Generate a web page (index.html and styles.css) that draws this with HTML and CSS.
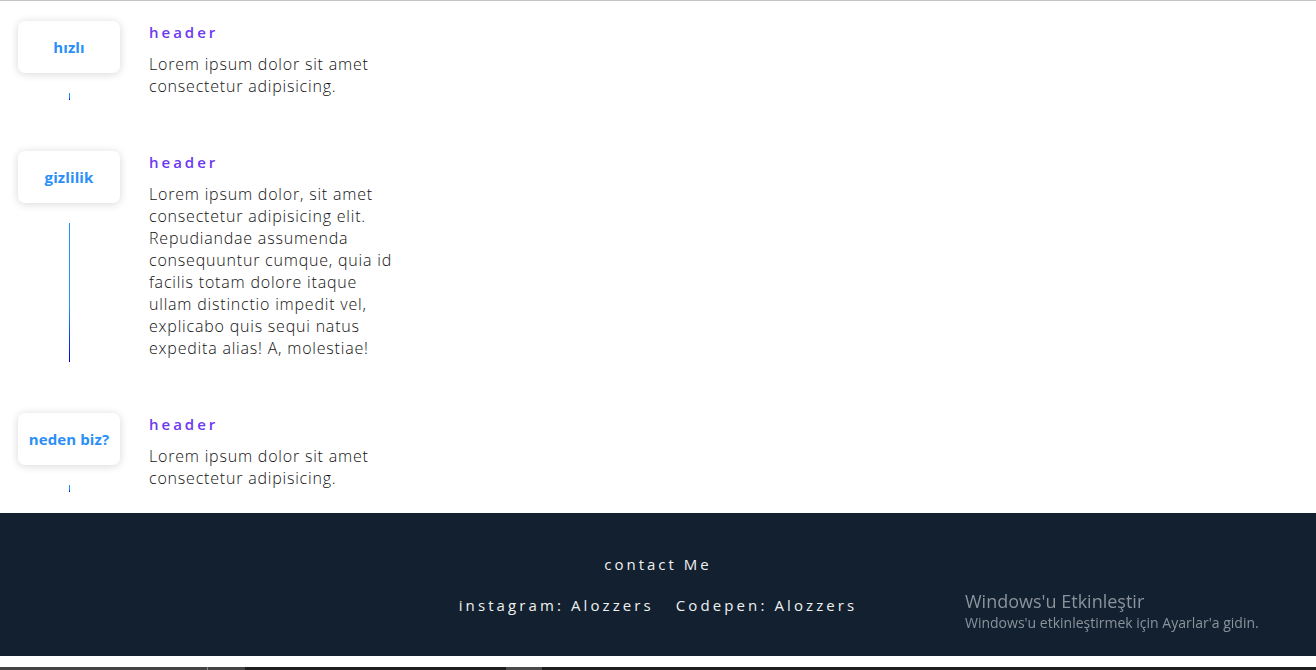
FILE: index.html
```html
<!DOCTYPE html>
<html lang="tr">
<head>
<meta charset="utf-8">
<title>Timeline</title>
<link rel="stylesheet" href="styles.css">
</head>
<body>
<main class="timeline">
  <section class="item">
    <div class="rail">
      <div class="card">hızlı</div>
      <div class="line"></div>
    </div>
    <div class="content">
      <h3 class="title">header</h3>
      <p class="text">Lorem ipsum dolor sit amet consectetur adipisicing.</p>
    </div>
  </section>
  <section class="item">
    <div class="rail">
      <div class="card">gizlilik</div>
      <div class="line"></div>
    </div>
    <div class="content">
      <h3 class="title">header</h3>
      <p class="text">Lorem ipsum dolor, sit amet consectetur adipisicing elit. Repudiandae assumenda consequuntur cumque, quia id facilis totam dolore itaque ullam distinctio impedit vel, explicabo quis sequi natus expedita alias! A, molestiae!</p>
    </div>
  </section>
  <section class="item">
    <div class="rail">
      <div class="card">neden biz?</div>
      <div class="line"></div>
    </div>
    <div class="content">
      <h3 class="title">header</h3>
      <p class="text">Lorem ipsum dolor sit amet consectetur adipisicing.</p>
    </div>
  </section>
</main>
<footer class="footer">
  <div class="contact">contact Me</div>
  <div class="links"><span>instagram: Alozzers</span><span>Codepen: Alozzers</span></div>
</footer>
<div class="gap"></div>
<div class="taskbar">
  <div class="tb-a"></div>
  <div class="tb-b"></div>
  <div class="tb-c"></div>
  <div class="tb-d"></div>
  <div class="tb-e"></div>
</div>
<div class="activate">
  <div class="act-title">Windows'u Etkinleştir</div>
  <div class="act-sub">Windows'u etkinleştirmek için Ayarlar'a gidin.</div>
</div>
</body>
</html>
```

FILE: styles.css
```css
* { box-sizing: border-box; }
html, body { margin: 0; padding: 0; }
body {
  border-top: 1px solid #c4c4c4;
  background: #fff;
  font-family: "Open Sans", "Noto Sans", sans-serif;
  overflow: hidden;
  height: 670px;
}
.timeline {
  display: flex;
  flex-direction: column;
  gap: 51px;
  padding: 20px 0 21px 18px;
}
.item {
  display: flex;
  gap: 29px;
  align-items: stretch;
}
.rail {
  width: 102px;
  display: flex;
  flex-direction: column;
  align-items: center;
}
.card {
  width: 102px;
  height: 52px;
  border-radius: 7px;
  background: #fff;
  box-shadow: 0 1px 8px rgba(0, 0, 0, 0.16);
  display: flex;
  align-items: center;
  justify-content: center;
  color: #2a8ff6;
  font-weight: 700;
  font-size: 15px;
  letter-spacing: 0.1px;
}
.line {
  flex: 1;
  width: 1px;
  margin-top: 20px;
  background: linear-gradient(#1e90ff 0%, #1e90ff 60%, #0000ee 100%);
}
.content {
  width: 252px;
  padding-bottom: 3px;
}
.title {
  margin: 0;
  font-size: 15px;
  line-height: 22px;
  font-weight: 600;
  letter-spacing: 3px;
  color: #6b39f2;
}
.text {
  margin: 10px 0 0;
  font-size: 16px;
  line-height: 22px;
  font-weight: 300;
  letter-spacing: 0.8px;
  color: #111;
}
.footer {
  background: #12202f;
  color: #f0f0f0;
  height: 143px;
  padding-top: 39px;
  display: flex;
  flex-direction: column;
  align-items: center;
  gap: 17px;
  font-size: 15px;
  font-weight: 400;
}
.contact {
  line-height: 24px;
  letter-spacing: 3px;
}
.links {
  line-height: 24px;
  letter-spacing: 3.1px;
  display: flex;
  gap: 22px;
}
.gap { height: 11px; background: #fff; }
.taskbar {
  height: 3px;
  display: flex;
  background: #1f1f1f;
}
.tb-a { width: 207px; background: #454545; }
.tb-b { width: 1px; background: #888; }
.tb-c { width: 37px; background: #454545; }
.tb-d { width: 261px; }
.tb-e { width: 36px; background: #4a4a4a; }
.activate {
  position: fixed;
  left: 965px;
  top: 589px;
  color: #8b939c;
}
.act-title {
  font-size: 18px;
  line-height: 24px;
  font-weight: 400;
}
.act-sub {
  font-size: 14px;
  line-height: 20px;
  color: #8b939c;
}
```
